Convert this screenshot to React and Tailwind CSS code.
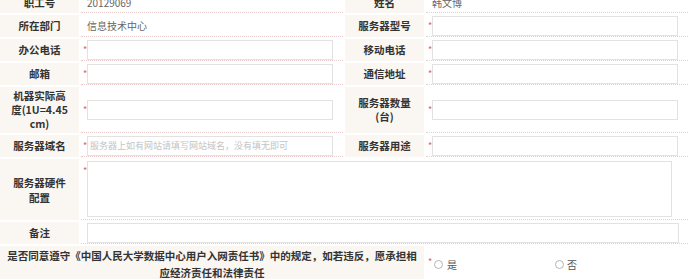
import React from 'react';

const Label = ({ children, className = '' }) => (
  <div
    className={`flex items-center justify-center bg-[#faf6f1] px-[4px] text-center text-[10.5px] font-bold leading-[14px] text-[#333] whitespace-nowrap ${className}`}
  >
    <div>{children}</div>
  </div>
);

const Star = ({ className = '' }) => (
  <span className={`w-[4px] shrink-0 text-[9px] leading-none text-[#e06060] ${className}`}>*</span>
);

const Cell = ({ children, className = '' }) => (
  <div className={`flex items-center border-b border-dotted border-[#ebcaca] pl-[2px] ${className}`}>
    {children}
  </div>
);

const Field = ({ placeholder }) => (
  <Cell>
    <div className="flex items-start">
      <Star className="mt-[5px]" />
      <input
        placeholder={placeholder}
        className="h-[20px] w-[246px] border border-[#e2e2e2] bg-white px-[2px] text-[9px] text-[#555] outline-none placeholder:text-[#c4c4c4]"
      />
    </div>
  </Cell>
);

const Text = ({ children }) => (
  <Cell>
    <span className="pl-[4px] text-[10px] text-[#666]">{children}</span>
  </Cell>
);

export default function App() {
  return (
    <div className="h-[279px] w-[692px] overflow-hidden bg-white font-['Noto_Sans_CJK_SC',sans-serif]">
      <div className="-mt-[8px] grid grid-cols-[79px_262px_79px_262px] gap-[2px]">
        {/* row 1 */}
        <Label className="h-[21px]">职工号</Label>
        <Text>20129069</Text>
        <Label>姓名</Label>
        <Text>韩文博</Text>

        {/* row 2 */}
        <Label className="h-[22px]">所在部门</Label>
        <Text>信息技术中心</Text>
        <Label>服务器型号</Label>
        <Field />

        {/* row 3 */}
        <Label className="h-[22px]">办公电话</Label>
        <Field />
        <Label>移动电话</Label>
        <Field />

        {/* row 4 */}
        <Label className="h-[22px]">邮箱</Label>
        <Field />
        <Label>通信地址</Label>
        <Field />

        {/* row 5 */}
        <Label className="h-[46px]">
          机器实际高
          <br />
          度(1U=4.45
          <br />
          cm)
        </Label>
        <Field />
        <Label>
          服务器数量
          <br />
          (台)
        </Label>
        <Field />

        {/* row 6 */}
        <Label className="h-[22px]">服务器域名</Label>
        <Field placeholder="服务器上如有网站请填写网站域名，没有填无即可" />
        <Label>服务器用途</Label>
        <Field />

        {/* row 7 */}
        <Label className="h-[61px] leading-[15px]">
          服务器硬件
          <br />
          配置
        </Label>
        <div className="col-span-3 flex items-start border-b border-dotted border-[#ebcaca] pl-[2px] pt-[2px]">
          <Star className="mt-[5px]" />
          <textarea className="h-[56px] w-[585px] resize-none border border-[#e2e2e2] bg-white outline-none" />
        </div>

        {/* row 8 */}
        <Label className="h-[22px]">备注</Label>
        <div className="col-span-3 flex items-center border-b border-dotted border-[#ebcaca] pl-[6px]">
          <input className="h-[20px] w-[592px] border border-[#e2e2e2] bg-white outline-none" />
        </div>

        {/* row 9 */}
        <Label className="col-span-3 h-[36px] leading-[17px]">
          是否同意遵守《中国人民大学数据中心用户入网责任书》中的规定，如若违反，愿承担相
          <br />
          应经济责任和法律责任
        </Label>
        <div className="flex items-center pl-[2px]">
          <Star className="-mt-[6px]" />
          <label className="flex w-[123px] items-center pl-[2px] text-[10px] text-[#555]">
            <span className="h-[9px] w-[9px] rounded-full border border-[#b5b5b5] bg-white" />
            <span className="ml-[4px]">是</span>
          </label>
          <label className="flex items-center text-[10px] text-[#555]">
            <span className="h-[9px] w-[9px] rounded-full border border-[#b5b5b5] bg-white" />
            <span className="ml-[3px]">否</span>
          </label>
        </div>
      </div>
    </div>
  );
}
